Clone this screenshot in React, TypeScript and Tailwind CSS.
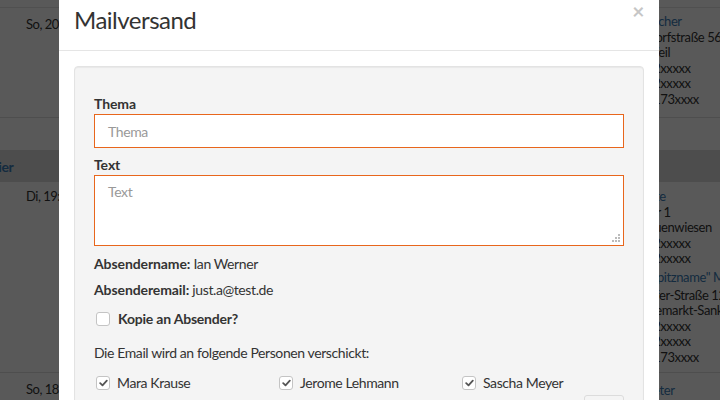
import React from "react";

function Check({ checked }: { checked?: boolean }) {
  return (
    <span className="flex h-[14px] w-[14px] shrink-0 items-center justify-center rounded-[3px] border border-[#c4c4c4] bg-white">
      {checked && (
        <svg width="9" height="8" viewBox="0 0 9 8">
          <path d="M1.2 4.2 L3.5 6.3 L7.8 1.6" fill="none" stroke="#555" strokeWidth="1.8" strokeLinecap="round" strokeLinejoin="round" />
        </svg>
      )}
    </span>
  );
}

export default function App() {
  const recipients = ["Mara Krause", "Jerome Lehmann", "Sascha Meyer"];
  return (
    <div className="relative h-[400px] w-[720px] overflow-hidden bg-white font-['Lato','Open_Sans',sans-serif] text-[14px] tracking-[-0.4px] text-[#333]">
      {/* underlying page */}
      <div className="flex flex-col">
        <div className="h-[8px] border-b border-[#e6e6e6]" />
        <div className="flex h-[110px] border-b border-[#e0e0e0]">
          <div className="w-[646px] shrink-0 pl-[26px] pt-[6px] text-[13px] leading-[20px] tracking-[-0.5px] text-[#333]">So, 20:15</div>
          <div className="flex w-[200px] shrink-0 flex-col whitespace-nowrap pt-[6px] text-[13px] leading-[15.6px] tracking-[-0.4px] text-[#333]">
            <span className="text-[#3a7bb5]">Escher</span>
            <span>Dorfstraße 56</span>
            <span>Weil</span>
            <span>12xxxxx</span>
            <span>12xxxxx</span>
            <span>0173xxxx</span>
          </div>
        </div>
        <div className="h-[32px]" />
        <div className="flex h-[32px] items-center bg-[#dcdcdc]">
          <span className="ml-[-12px] font-bold text-[#3a7bb5]">Hier</span>
        </div>
        <div className="flex h-[191px] border-b border-[#e0e0e0]">
          <div className="w-[646px] shrink-0 pl-[26px] pt-[4px] text-[13px] leading-[20px] tracking-[-0.5px]">Di, 19:30</div>
          <div className="flex w-[200px] shrink-0 flex-col whitespace-nowrap pt-[7px] text-[13px] leading-[15.6px] tracking-[-0.4px]">
            <span className="text-[#3a7bb5]">Ute</span>
            <span>Str 1</span>
            <span>Auenwiesen</span>
            <span>12xxxxx</span>
            <span>12xxxxx</span>
            <span className="mt-[3px] text-[#3a7bb5]">"Spitzname" Meyer</span>
            <span className="mt-[2px]">Ufer-Straße 12</span>
            <span>Nemarkt-Sankt Veit</span>
            <span>12xxxxx</span>
            <span>12xxxxx</span>
            <span>0173xxxx</span>
          </div>
        </div>
        <div className="flex">
          <div className="w-[646px] shrink-0 pl-[26px] pt-[6px] text-[13px] leading-[20px] tracking-[-0.5px]">So, 18:00</div>
          <div className="w-[200px] shrink-0 pt-[7px] text-[13px] leading-[20px] tracking-[-0.4px] text-[#3a7bb5]">Peter</div>
        </div>
      </div>

      {/* backdrop */}
      <div className="absolute inset-0 bg-black/65" />

      {/* modal */}
      <div className="absolute left-[59px] top-[-6px] w-[600px] bg-white">
        <div className="flex items-start justify-between border-b border-[#e5e5e5] pl-[15px] pr-[15px] pt-[11px] pb-[15px]">
          <h4 className="text-[24px] leading-[30px] tracking-[-0.5px] text-[#333]">Mailversand</h4>
          <span className="mt-[-5px] text-[21px] font-bold leading-[21px] text-[#c6c6c6]">×</span>
        </div>
        <div className="p-[15px]">
          <div className="rounded-[4px] border border-[#e3e3e3] bg-[#f4f4f4] px-[19px] pt-[28px] pb-[20px] shadow-[inset_0_1px_1px_rgba(0,0,0,0.05)]">
            <label className="mb-[1px] block text-[14px] font-bold leading-[18px] tracking-[-0.1px] text-[#333]">Thema</label>
            <div className="mb-[8px] flex h-[34px] items-center border border-[#e8661c] bg-white px-[13px] text-[14px] text-[#999]">
              Thema
            </div>
            <label className="mb-[1px] block text-[14px] font-bold leading-[18px] tracking-[-0.1px] text-[#333]">Text</label>
            <div className="relative mb-[8px] h-[71px] border border-[#e8661c] bg-white px-[13px] pt-[6px] text-[14px] leading-[20px] text-[#999]">
              Text
              <svg className="absolute bottom-[2px] right-[2px]" width="9" height="9" viewBox="0 0 9 9">
                <rect x="6" y="0" width="2" height="2" fill="#bbb" />
                <rect x="3" y="3" width="2" height="2" fill="#bbb" />
                <rect x="6" y="3" width="2" height="2" fill="#bbb" />
                <rect x="0" y="6" width="2" height="2" fill="#bbb" />
                <rect x="3" y="6" width="2" height="2" fill="#bbb" />
                <rect x="6" y="6" width="2" height="2" fill="#bbb" />
              </svg>
            </div>
            <p className="mb-[6px] leading-[20px]">
              <span className="font-bold tracking-[-0.1px]">Absendername:</span> Ian Werner
            </p>
            <p className="mb-[9px] leading-[20px]">
              <span className="font-bold tracking-[-0.1px]">Absenderemail:</span> just.a@test.de
            </p>
            <div className="mb-[14px] flex items-center gap-[8px] pl-[2px] leading-[20px]">
              <Check />
              <span className="font-bold tracking-[-0.2px]">Kopie an Absender?</span>
            </div>
            <p className="mb-[10px] leading-[20px]">Die Email wird an folgende Personen verschickt:</p>
            <div className="grid grid-cols-[183px_183px_183px] leading-[20px]">
              {recipients.map((r) => (
                <div key={r} className="flex items-center gap-[7px] pl-[2px]">
                  <Check checked />
                  <span>{r}</span>
                </div>
              ))}
            </div>
            <div className="mt-[2px] flex justify-end">
              <div className="h-[30px] w-[40px] rounded-[3px] border border-[#dcdcdc] bg-[#f4f4f4]" />
            </div>
          </div>
        </div>
      </div>
    </div>
  );
}
